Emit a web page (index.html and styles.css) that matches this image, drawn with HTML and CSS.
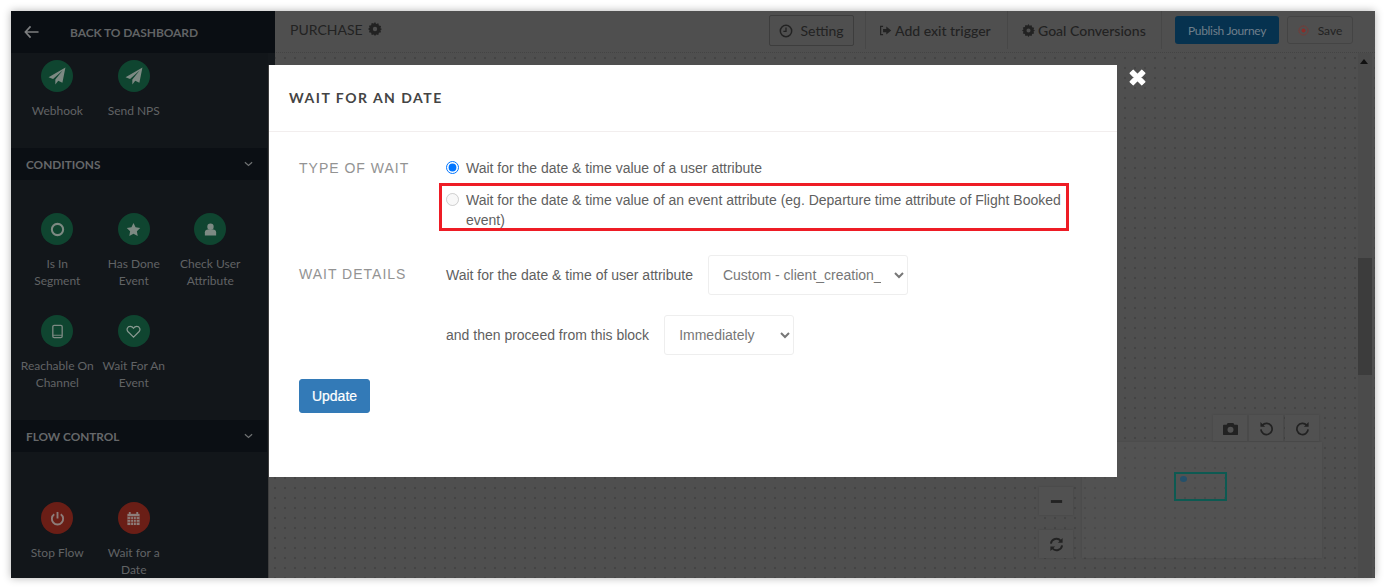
FILE: index.html
```html
<!DOCTYPE html>
<html lang="en">
<head>
<meta charset="utf-8">
<title>Wait for an date</title>
<link rel="stylesheet" href="styles.css">
</head>
<body>
<div class="frame">
  <aside class="sidebar">
    <div class="back">
      <svg class="back-arrow" viewBox="0 0 16 14"><path d="M7 1 1.500 7 7 13M2 7h13.500" fill="none" stroke="#7d7f80" stroke-width="1.800"/></svg>
      <span>BACK TO DASHBOARD</span>
    </div>
    <div class="grid first">
      <div class="tool"><span class="dot green plane"><svg viewBox="0 0 16 16"><path d="M15.500.5.500 9l4 1.700L13 3 6.500 11v4.500l2.600-3.200 3.700 1.600z" fill="#7d8a83"/></svg></span><p>Webhook</p></div>
      <div class="tool"><span class="dot green plane"><svg viewBox="0 0 16 16"><path d="M15.500.5.500 9l4 1.700L13 3 6.500 11v4.500l2.600-3.200 3.700 1.600z" fill="#7d8a83"/></svg></span><p>Send NPS</p></div>
    </div>
    <div class="bar"><span>CONDITIONS</span><svg viewBox="0 0 10 6"><path d="M1 1l4 3.500L9 1" fill="none" stroke="#6f7173" stroke-width="1.400"/></svg></div>
    <div class="grid second">
      <div class="tool"><span class="dot green"><svg viewBox="0 0 16 16"><circle cx="8" cy="8" r="6" fill="none" stroke="#7d8a83" stroke-width="2.200"/></svg></span><p>Is In<br>Segment</p></div>
      <div class="tool"><span class="dot green"><svg viewBox="0 0 16 16"><path d="M8 1l2.200 4.600 5 .7-3.600 3.500.9 5L8 12.400l-4.500 2.400.9-5L.8 6.300l5-.7z" fill="#7d8a83"/></svg></span><p>Has Done<br>Event</p></div>
      <div class="tool"><span class="dot green"><svg viewBox="0 0 16 16"><circle cx="8" cy="5" r="3.400" fill="#7d8a83"/><path d="M2 14.500V11c0-2 1.500-3 3-3h6c1.500 0 3 1 3 3v3.500z" fill="#7d8a83"/></svg></span><p>Check User<br>Attribute</p></div>
      <div class="tool"><span class="dot green"><svg viewBox="0 0 16 16"><rect x="3" y="1.500" width="10" height="13" rx="1.500" fill="none" stroke="#7d8a83" stroke-width="1.400"/><path d="M3 12h10" stroke="#7d8a83"/></svg></span><p>Reachable On<br>Channel</p></div>
      <div class="tool"><span class="dot green"><svg viewBox="0 0 16 16"><path d="M8 14 2 8C.2 5.800 1.500 2.500 4.500 2.500 6 2.500 7.200 3.300 8 4.500 8.800 3.300 10 2.500 11.500 2.500 14.500 2.500 15.800 5.800 14 8z" fill="none" stroke="#8a9a92" stroke-width="1.300"/></svg></span><p>Wait For An<br>Event</p></div>
    </div>
    <div class="bar bar-flow"><span>FLOW CONTROL</span><svg viewBox="0 0 10 6"><path d="M1 1l4 3.500L9 1" fill="none" stroke="#6f7173" stroke-width="1.400"/></svg></div>
    <div class="grid third">
      <div class="tool"><span class="dot red"><svg viewBox="0 0 16 16"><path d="M8 1v7" stroke="#8d7d7a" stroke-width="2" fill="none"/><path d="M4.500 3.500a6 6 0 1 0 7 0" stroke="#8d7d7a" stroke-width="2" fill="none"/></svg></span><p>Stop Flow</p></div>
      <div class="tool"><span class="dot red"><svg viewBox="0 0 16 16"><path d="M1.500 3h13v12h-13z" fill="#8d7d7a"/><path d="M4 1v3M12 1v3" stroke="#8d7d7a" stroke-width="2"/><path d="M1.500 6h13M1.500 9h13M1.500 12h13M5 6v9M8 6v9M11 6v9" stroke="#6d2018" stroke-width=".8"/></svg></span><p>Wait for a<br>Date</p></div>
    </div>
  </aside>

  <main class="main">
    <header class="top">
      <div class="journey">PURCHASE <svg class="gear" viewBox="0 0 16 16"><path d="M8 0l1.300 2.200 2.500-.7.600 2.500 2.500.6-.7 2.500L16 8l-1.800 1.300.7 2.500-2.500.6-.6 2.500-2.500-.7L8 16l-1.300-1.800-2.500.7-.6-2.500-2.500-.6.7-2.500L0 8l1.800-1.300-.7-2.500 2.500-.6.6-2.500 2.500.7zM8 5.500a2.500 2.500 0 1 0 0 5 2.500 2.500 0 0 0 0-5z" fill="#222" fill-rule="evenodd"/></svg></div>
      <div class="actions">
        <button class="btn-setting"><svg viewBox="0 0 16 16"><circle cx="8" cy="8" r="6.500" fill="none" stroke="#222" stroke-width="1.700"/><path d="M8 4v4.500H5" fill="none" stroke="#222" stroke-width="1.500"/></svg>Setting</button>
        <div class="link l-exit"><svg viewBox="0 0 16 16"><path d="M5 3H2v10h3" fill="none" stroke="#222" stroke-width="1.500"/><path d="M9 3l6 5-6 5v-3H5V6h4z" fill="#222"/></svg>Add exit trigger</div>
        <div class="link l-goal"><svg viewBox="0 0 16 16"><path d="M8 0l1.300 2.200 2.500-.7.600 2.500 2.500.6-.7 2.500L16 8l-1.800 1.300.7 2.500-2.500.6-.6 2.500-2.500-.7L8 16l-1.300-1.800-2.500.7-.6-2.500-2.500-.6.7-2.500L0 8l1.800-1.300-.7-2.500 2.500-.6.6-2.500 2.500.7zM8 5.500a2.500 2.500 0 1 0 0 5 2.500 2.500 0 0 0 0-5z" fill="#222" fill-rule="evenodd"/></svg>Goal Conversions</div>
        <button class="btn-publish">Publish Journey</button>
        <button class="btn-save"><svg viewBox="0 0 12 12"><circle cx="6" cy="6" r="5" fill="none" stroke="#7a3a36"/><circle cx="6" cy="6" r="2.200" fill="#8c2c28"/></svg>Save</button>
      </div>
    </header>
    <div class="canvas">
      <div class="scrollbar"><span class="s-up"></span><span class="s-thumb"></span></div>
      <div class="minimap"><span class="mini-view"><i></i></span></div>
      <div class="tools-row">
        <span class="sq"><svg viewBox="0 0 16 14"><path d="M5 1h6l1.200 2H15a1 1 0 0 1 1 1v9a1 1 0 0 1-1 1H1a1 1 0 0 1-1-1V4a1 1 0 0 1 1-1h2.800zM8 5a3.200 3.200 0 1 0 0 6.400A3.200 3.200 0 0 0 8 5z" fill="#222" fill-rule="evenodd"/></svg></span>
        <span class="sq"><svg viewBox="0 0 16 16"><path d="M3.500 4.500A6 6 0 1 1 2 9" fill="none" stroke="#222" stroke-width="1.800"/><path d="M1.500 1v5h5z" fill="#222"/></svg></span>
        <span class="sq"><svg viewBox="0 0 16 16"><path d="M12.500 4.500A6 6 0 1 0 14 9" fill="none" stroke="#222" stroke-width="1.800"/><path d="M14.500 1v5h-5z" fill="#222"/></svg></span>
      </div>
      <span class="sq sq-minus"><svg viewBox="0 0 16 16"><path d="M2 6.500h12v3H2z" fill="#222"/></svg></span>
      <span class="sq sq-sync"><svg viewBox="0 0 16 16"><path d="M2 7a6 6 0 0 1 10.500-3M14 9a6 6 0 0 1-10.500 3" fill="none" stroke="#222" stroke-width="2"/><path d="M14.500 1v5h-5zM1.500 15v-5h5z" fill="#222"/></svg></span>
    </div>
  </main>

  <section class="modal">
    <h2 class="modal-title">WAIT FOR AN DATE</h2>
    <div class="modal-body">
      <div class="form-row">
        <div class="label">TYPE OF WAIT</div>
        <div class="options">
          <label class="option"><input type="radio" name="wait" checked><span>Wait for the date &amp; time value of a user attribute</span></label>
          <label class="option option-hl"><input type="radio" name="wait" disabled><span>Wait for the date &amp; time value of an event attribute (eg. Departure time attribute of Flight Booked event)</span></label>
        </div>
      </div>
      <div class="form-row details">
        <div class="label label-details">WAIT DETAILS</div>
        <div class="detail-rows">
          <div class="detail"><span>Wait for the date &amp; time of user attribute</span><select class="sel sel-a"><option>Custom - client_creation_date</option></select></div>
          <div class="detail"><span>and then proceed from this block</span><select class="sel sel-b"><option>Immediately</option></select></div>
        </div>
      </div>
      <button class="update">Update</button>
    </div>
  </section>
  <svg class="close" viewBox="0 0 16 16"><path d="M1 4l3-3 4 4 4-4 3 3-4 4 4 4-3 3-4-4-4 4-3-3 4-4z" fill="#fff" stroke="#fff" stroke-linejoin="round"/></svg>
</div>
</body>
</html>
```
FILE: styles.css
```css
* { box-sizing: border-box; }
html, body { margin: 0; height: 100%; background: #fff; overflow: hidden; }
body { padding: 11px 10px 10px 11px; }
.frame {
  position: relative;
  display: flex;
  height: 567px;
  background: #4f4f4f;
  box-shadow: 0 0 8px rgba(0,0,0,.3);
  font-family: Lato, sans-serif;
}
.sidebar {
  position: relative;
  z-index: 1;
  width: 257px;
  height: 567px;
  flex: none;
  background: #12161a;
  color: #616365;
  font-size: 12px;
}
.sidebar::after {
  content: "";
  position: absolute;
  left: 257px; top: 42px;
  width: 7px; height: 12px;
  background: #14181c;
}
.back {
  width: 264px;
  height: 42px;
  background: #0a0e13;
  display: flex;
  align-items: center;
  color: #616365;
  font-weight: 700;
  font-size: 12px;
  letter-spacing: -.1px;
}
.back-arrow { width: 15px; height: 14px; margin: 0 31px 0 13px; flex: none; }
.grid { display: grid; grid-template-columns: repeat(3, 76.500px); padding-left: 8px; }
.first { padding-top: 7px; height: 95px; }
.second { padding-top: 33px; height: 240px; grid-auto-rows: 102px; }
.third { padding-top: 50px; height: 126px; overflow: hidden; }
.tool { display: flex; flex-direction: column; align-items: center; text-align: center; }
.tool p { margin: 10px 0 0; line-height: 17px; white-space: nowrap; font-size: 12px; }
.dot { width: 32px; height: 32px; border-radius: 50%; display: flex; align-items: center; justify-content: center; }
.dot svg { width: 15px; height: 15px; }
.plane svg { width: 18px; height: 18px; }
.green { background: #0f4530; }
.red { background: #6a1e16; }
.bar {
  height: 32px;
  background: #0b0f14;
  display: flex;
  align-items: center;
  justify-content: space-between;
  padding: 0 14px 0 15px;
  width: 256px;
  font-weight: 700;
  font-size: 11.800px;
  color: #66686a;
}
.bar svg { width: 9px; height: 6px; }
.main { flex: 1; display: flex; flex-direction: column; min-width: 0; }
.top {
  height: 42px;
  display: flex;
  justify-content: space-between;
  color: #222;
  border-bottom: 1px dotted #444;
  padding-left: 22px;
}
.journey { display: flex; align-items: center; gap: 5px; font-size: 14px; padding-bottom: 5px; white-space: nowrap; }
.gear { width: 14px; height: 14px; }
.actions { display: flex; align-items: flex-start; padding-right: 22px; font-size: 14px; }
.actions svg { flex: none; }
button { font-family: inherit; }
.btn-setting {
  width: 85px; height: 31px; margin-top: 4px;
  background: transparent; border: 1px solid #3d3d3d; border-radius: 2px;
  color: #222; font-size: 14px;
  display: flex; align-items: center; justify-content: center; gap: 7px; padding: 0;
}
.btn-setting svg { width: 14px; height: 14px; }
.link {
  height: 38px;
  display: flex; align-items: center; gap: 3px;
  border-left: 1px solid #474747;
  font-size: 14px;
  font-weight: 500;
  color: #222;
  white-space: nowrap;
  flex: none;
}
.link svg { width: 13px; height: 13px; }
.l-exit { margin-left: 11px; padding-left: 13px; width: 142px; }
.l-goal { padding-left: 14px; width: 155px; border-right: 1px solid #474747; }
.btn-publish {
  width: 104px; height: 28px; margin: 5px 0 0 13px; padding: 0;
  background: #06324f; border: 0; border-radius: 3px;
  color: #6f7f8b; font-size: 12px; letter-spacing: -.3px;
  white-space: nowrap; flex: none;
}
.btn-save {
  width: 66px; height: 28px; margin: 5px 0 0 8px; padding: 0;
  background: transparent; border: 1px solid #444; border-radius: 3px;
  color: #222; font-size: 12px;
  display: flex; align-items: center; justify-content: center; gap: 9px;
  flex: none;
}
.btn-save svg { width: 11px; height: 11px; }
.canvas {
  position: relative;
  flex: 1;
  background-color: #4f4f4f;
  background-image: radial-gradient(circle, #444 .8px, transparent 1px);
  background-size: 10px 10px;
  background-position: 1px 0;
  border-left: 1px solid #3f3f3f;
}
.scrollbar { position: absolute; right: 3px; top: 0; bottom: 0; width: 14px; background: #4b4b4b; }
.s-up {
  position: absolute; left: 2px; top: 6px;
  border: 4px solid transparent; border-top: 0; border-bottom: 5px solid #111;
}
.s-thumb { position: absolute; left: 0; right: 0; top: 205px; height: 117px; background: #3c3c3c; }
.minimap {
  position: absolute; left: 813px; top: 389px; width: 240px; height: 116px;
  background: rgba(90,90,90,.25);
  box-shadow: 0 0 2px rgba(0,0,0,.1);
}
.mini-view {
  position: absolute; left: 92px; top: 30px; width: 53px; height: 29px;
  border: 2px solid #0d5a52;
}
.mini-view i { position: absolute; left: 4px; top: 2px; width: 7px; height: 6px; border-radius: 50%; background: #24506a; }
.tools-row { position: absolute; left: 944px; top: 362px; display: flex; gap: 2px; }
.sq {
  width: 34px; height: 26px;
  display: flex; align-items: center; justify-content: center;
  background: #515151;
  box-shadow: 0 0 2px rgba(0,0,0,.15);
}
.sq svg { width: 15px; height: 15px; }
.sq-minus, .sq-sync { position: absolute; left: 770px; height: 28px; }
.sq-minus { top: 434px; }
.sq-sync { top: 477px; }
.modal {
  position: absolute;
  z-index: 2;
  left: 258px; top: 54px;
  width: 848px; height: 412px;
  background: #fff;
  color: #5f5f5f;
  font-family: "Liberation Sans", Arial, sans-serif;
  font-size: 14px;
}
.modal-title {
  margin: 0;
  height: 67px;
  padding: 24px 0 0 20px;
  border-bottom: 1px solid #f2eeee;
  font-family: Lato, sans-serif;
  font-size: 14px;
  line-height: 17px;
  font-weight: 700;
  letter-spacing: 1.500px;
  color: #444;
}
.modal-body { padding: 26px 30px 0; }
.form-row { display: flex; }
.label { width: 147px; flex: none; color: #939393; letter-spacing: 1px; font-size: 14px; line-height: 20px; }
.options { width: 623px; }
.option { display: flex; line-height: 20px; }
.option input { margin: 3px 7px 0 0; width: 13px; height: 13px; flex: none; }
.option-hl { position: relative; margin-top: 12px; }
.option-hl::after {
  content: "";
  position: absolute;
  left: -7px; top: -7px; right: 0; bottom: -1px;
  border: 3px solid #ee1c25;
  pointer-events: none;
}
.details { margin-top: 27px; }
.label-details { padding-top: 7px; }
.detail-rows { display: flex; flex-direction: column; gap: 20px; margin-top: -2px; }
.detail { display: flex; align-items: center; gap: 15px; }
.sel {
  height: 40px;
  background: #fff;
  border: 1px solid #eee;
  border-radius: 3px;
  color: #777;
  font-family: inherit;
  font-size: 14px;
  padding: 0 10px;
}
.sel-a { width: 200px; }
.sel-b { width: 130px; }
.update {
  display: block;
  width: 71px; height: 34px;
  margin-top: 24px;
  background: #337ab7;
  border: 1px solid #337ab7;
  border-radius: 3px;
  color: #fff;
  font-family: "Liberation Sans", Arial, sans-serif;
  font-size: 14px;
  font-weight: 400;
  -webkit-text-stroke: .2px #fff;
}
.close { position: absolute; z-index: 3; left: 1118px; top: 58px; width: 17px; height: 17px; }
```
